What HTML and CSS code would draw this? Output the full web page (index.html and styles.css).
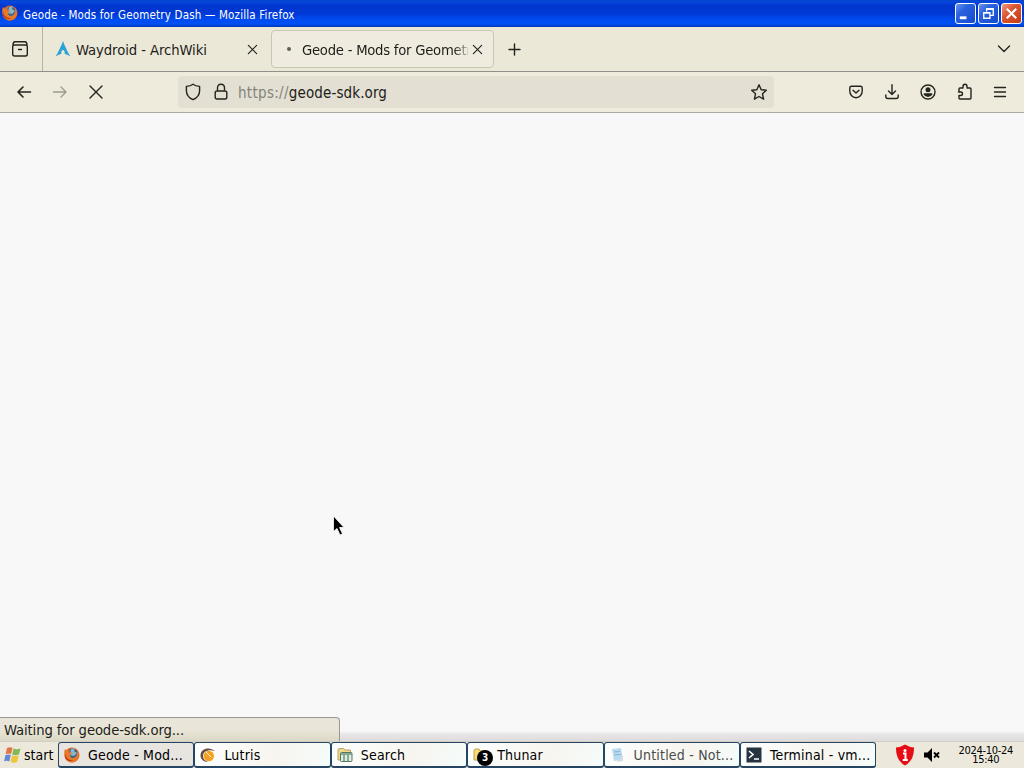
FILE: index.html
```html
<!DOCTYPE html>
<html lang="en">
<head>
    <meta charset="UTF-8">
    <title>Geode - Mods for Geometry Dash — Mozilla Firefox</title>
    <link rel="stylesheet" href="styles.css">
</head>
<body>
    <!-- Shared icons -->
    <svg class="defs" width="0" height="0">
        <symbol id="firefox" viewBox="0 0 16 16">
            <circle cx="8" cy="8" r="7.5" fill="#e8641b"/>
            <circle cx="8.7" cy="6.6" r="5" fill="#35688f"/>
            <path d="M7 2l4-1-1 3 3 2-3 3-4-1z" fill="#8fb3c9"/>
            <path d="M1 2l2 2 3-1-1 2 3 1-2 2c0 4 6 4 7-1 1-2 0-4-1-5 4 3 3 8 1 11-3 4-10 3-12-2C0 7 0 4 1 2z" fill="#e9792a"/>
            <path d="M1 5c0 6 4 9 9 8-3 2-8 1-9-3z" fill="#b93516"/>
        </symbol>
        <symbol id="close" viewBox="0 0 16 16"><path d="M2 2l12 12M14 2L2 14"/></symbol>
    </svg>

    <div class="desktop">
        <!-- Window title bar -->
        <header class="titlebar">
            <svg class="title-icon"><use href="#firefox"/></svg>
            <span class="title-text">Geode - Mods for Geometry Dash — Mozilla Firefox</span>
            <div class="window-buttons">
                <span class="window-button"><svg viewBox="0 0 20 20"><path d="M4 14.5h7" stroke-width="3"/></svg></span>
                <span class="window-button"><svg viewBox="0 0 20 20"><path d="M8 8V5h7v7h-3M5 9h6.500v6H5zM8 5.500h7M5 9.500h6" stroke-width="1.400"/></svg></span>
                <span class="window-button window-close"><svg viewBox="0 0 20 20"><path d="M5 5l10 10M15 5L5 15" stroke-width="2.200"/></svg></span>
            </div>
        </header>

        <!-- Tabs -->
        <div class="tabbar">
            <div class="firefox-view">
                <svg class="icon" width="18" height="18" viewBox="0 0 18 18"><path d="M4 1.800h10M3.500 5h11q1.800 0 1.800 1.800v7.400q0 1.800-1.800 1.800h-11q-1.800 0-1.800-1.800V6.800Q1.700 5 3.500 5zM2 5.500Q2 1.800 4 1.800M16 5.500Q16 1.800 14 1.800M7.500 9.500h3"/></svg>
            </div>
            <div class="tab">
                <svg class="tab-icon" width="16" height="16" viewBox="0 0 16 16"><path d="M8 0C7 3 4 10 .5 15.500c2.500-1.500 4.200-2.200 5.800-2.500-.3-2 .4-4 1.700-4s2 2 1.700 4c1.600.3 3.300 1 5.800 2.500C12 10 9 3 8 0z" fill="#2aa3d4"/></svg>
                <span class="tab-title">Waydroid - ArchWiki</span>
                <svg class="icon tab-close" width="11" height="11"><use href="#close"/></svg>
            </div>
            <div class="tab tab-active">
                <span class="loading-dot"></span>
                <span class="tab-title tab-fade">Geode - Mods for Geometry Dash</span>
                <svg class="icon tab-close" width="11" height="11"><use href="#close"/></svg>
            </div>
            <svg class="icon new-tab" width="13" height="13" viewBox="0 0 13 13"><path d="M6.500 1v11M1 6.500h11"/></svg>
            <svg class="icon all-tabs" width="14" height="10" viewBox="0 0 14 10"><path d="M1.500 2L7 7.500 12.500 2"/></svg>
        </div>

        <!-- Navigation -->
        <div class="navbar">
            <div class="nav-buttons">
                <svg class="icon" width="16" height="16" viewBox="0 0 16 16"><path d="M14.500 8H2M7 3L2 8l5 5" stroke-width="1.600"/></svg>
                <svg class="icon disabled" width="16" height="16" viewBox="0 0 16 16"><path d="M1.500 8H14M9 3l5 5-5 5"/></svg>
                <svg class="icon" width="16" height="16"><use href="#close"/></svg>
            </div>
            <div class="urlbar">
                <svg class="icon" width="16" height="18" viewBox="0 0 16 18"><path d="M8 1.200c2 1.500 4.200 2 6.600 2.200v4.300c0 4-2.200 7-6.600 9-4.400-2-6.600-5-6.600-9V3.400C3.800 3.200 6 2.700 8 1.200z"/></svg>
                <svg class="icon lock" width="14" height="18" viewBox="0 0 14 18"><path d="M3.500 8V5q0-3.800 3.500-3.800T10.500 5v3M3 8h8q1.800 0 1.800 1.800v4.400q0 1.800-1.800 1.800H3q-1.800 0-1.800-1.800V9.800Q1.200 8 3 8z"/></svg>
                <span class="url"><span class="url-scheme">https://</span>geode-sdk.org</span>
                <svg class="icon star" width="18" height="18" viewBox="0 0 18 18"><path d="M9 1.800l2.200 4.900 5.100.6-3.800 3.500 1.100 5.300L9 13.500l-4.600 2.600 1.100-5.300-3.800-3.500 5.100-.6z"/></svg>
            </div>
            <div class="nav-tools">
                <svg class="icon" width="16" height="16" viewBox="0 0 16 16"><path d="M3.500 2.200h9q1.700 0 1.700 1.700V7c0 4-2.700 6.700-6.200 6.700S1.800 11 1.800 7V3.900q0-1.700 1.700-1.700zM5 6.200l3 2.800 3-2.800"/></svg>
                <svg class="icon" width="16" height="16" viewBox="0 0 16 16"><path d="M8 .8v9.700M4.500 7L8 10.500 11.500 7M1.800 11v1.500q0 2 2 2h8.400q2 0 2-2V11"/></svg>
                <svg class="icon" width="16" height="16" viewBox="0 0 16 16"><circle cx="8" cy="8" r="7"/><circle cx="8" cy="5.800" r="2.500" class="solid"/><path d="M3.500 10.200q0-1 1-1h7q1 0 1 1Q11 13 8 13t-4.500-2.800z" class="solid"/></svg>
                <svg class="icon" width="16" height="18" viewBox="0 0 16 18"><path d="M2 9V6q0-1 1-1h3V3.500Q6 1.200 8 1.200t2 2.300V5h3q1 0 1 1v9q0 1-1 1H3q-1 0-1-1v-2.500h1.500q2 0 2-1.800T3.500 9H1.500"/></svg>
                <svg class="icon menu" width="14" height="14" viewBox="0 0 14 14"><path d="M1.500 2.500h11M1.500 7h11M1.500 11.500h11"/></svg>
            </div>
        </div>

        <!-- Page area -->
        <main class="page">
            <svg class="cursor" width="14" height="22" viewBox="0 0 14 22"><path d="M1.500 1v15.500l3.500-3 3 6.500 2.500-1.200L7.500 12.500H12z" fill="#000" stroke="#fff" stroke-width=".8"/></svg>
            <div class="status">Waiting for geode-sdk.org...</div>
        </main>

        <!-- Taskbar -->
        <footer class="taskbar">
            <div class="start">
                <svg width="18" height="18" viewBox="0 0 18 18">
                    <path d="M3 2q3-1.500 5.500 0L7 8Q4.500 7 1.700 8z" fill="#e27343"/>
                    <path d="M9.500 2.500q3 1.500 7 0L15 8.500q-4 1.300-6.800 0z" fill="#85b855"/>
                    <path d="M1.500 9Q4.500 7.800 6.800 9l-1.500 6.500q-3-1.500-5.300 0z" fill="#6488d8"/>
                    <path d="M8 9.500q3 1.200 6.800 0L13.200 16q-3.500 1.500-6.700-.3z" fill="#edc640"/>
                </svg>
                <span>start</span>
            </div>
            <div class="task task-active">
                <svg class="task-icon" viewBox="0 0 16 16"><use href="#firefox"/></svg>
                <span>Geode - Mod...</span>
            </div>
            <div class="task">
                <svg class="task-icon" viewBox="0 0 16 16"><circle cx="8.800" cy="9" r="5.200" fill="#f5a021"/><path d="M15 4C10-.5 .5 1 .5 8.500c0 4 3.500 6.500 7.500 6.500-3-1-5-3-5-6 0-5 6-7 12-5z" fill="#684c42"/><path d="M6 5l5 5" stroke="#fff2d9"/></svg>
                <span>Lutris</span>
            </div>
            <div class="task">
                <svg class="task-icon" viewBox="0 0 16 16"><path d="M1 13V3q0-1.500 1.500-1.500h4L8 3h5.500v10z" fill="#f1d887" stroke="#b6a168"/><rect x="3.500" y="5.500" width="11.500" height="9" rx="1" fill="#e0ece4" stroke="#59745f"/><path d="M4 7h11M7 7v7M11 7v7" stroke="#6b987c" stroke-width="1.500"/></svg>
                <span>Search</span>
            </div>
            <div class="task">
                <svg class="task-icon" viewBox="0 0 16 16"><path d="M1 13V4q0-2 2-2h3l1 2h6v9z" fill="#f7d97b" stroke="#c49f41"/></svg>
                <span class="badge">3</span>
                <span>Thunar</span>
            </div>
            <div class="task task-minimized">
                <svg class="task-icon" viewBox="0 0 16 16"><path d="M2 2l9-1 2 12-9 1z" fill="#b9daef"/><path d="M4 5l6-.6M4.500 8l6-.6" stroke="#80b5d8"/><path d="M7 15l6-1V8z" fill="#d5dce0"/></svg>
                <span>Untitled - Not...</span>
            </div>
            <div class="task">
                <svg class="task-icon" viewBox="0 0 16 16"><rect x=".5" y=".5" width="15" height="15" fill="#263441"/><path d="M3 4l4 3.500L3 11M8 12h5" fill="none" stroke="#fff" stroke-width="1.600"/></svg>
                <span>Terminal - vm...</span>
            </div>
            <div class="tray">
                <svg width="20" height="22" viewBox="0 0 20 22"><path d="M10 .5Q14 3 19 3.500 19.500 16 10 21.500.5 16 1 3.500 6 3 10 .5z" fill="#e60d17"/><circle cx="10" cy="6.500" r="1.500" fill="#fff"/><path d="M8 9.500h2.500V16M7.800 16h5" fill="none" stroke="#fff" stroke-width="2"/></svg>
                <svg width="16" height="16" viewBox="0 0 16 16"><path d="M0 5.500h3.500L8 1v14l-4.500-4.500H0z"/><path d="M10 5.500l5 5M15 5.500l-5 5" stroke="#000" stroke-width="1.800"/></svg>
                <div class="clock"><span>2024-10-24</span><span>15:40</span></div>
            </div>
        </footer>
    </div>
</body>
</html>
```
FILE: styles.css
```css
* {
    box-sizing: border-box;
}

body {
    margin: 0;
    overflow: hidden;
    font-family: "DejaVu Sans Condensed", "DejaVu Sans", sans-serif;
    font-stretch: condensed;
    color: #1c1c18;
}

svg {
    flex-shrink: 0;
}

.defs {
    display: block;
}

.desktop {
    width: 1024px;
    height: 768px;
    display: flex;
    flex-direction: column;
}

/* Title bar */
.titlebar {
    height: 27px;
    padding: 0 2px 0 2px;
    display: flex;
    align-items: center;
    background: linear-gradient(#0745c8 0, #0546df 2px, #0036ce 6px, #0039d6 14px, #004df1 20px, #0050f5 24px, #0736b4 27px);
    color: #fff;
}

.title-icon {
    width: 16px;
    height: 16px;
    margin: 0 5px 2px 0;
}

.title-text {
    padding-top: 2px;
    font-size: 11.5px;
    letter-spacing: 0.18px;
    white-space: nowrap;
}

.window-buttons {
    display: flex;
    gap: 2px;
    margin-left: auto;
}

.window-button {
    width: 21px;
    height: 21px;
    border: 1px solid #fff;
    border-radius: 3px;
    background: linear-gradient(135deg, #6a93f1, #2962de 35%, #144bcf);
}

.window-button svg {
    display: block;
    width: 19px;
    height: 19px;
    fill: none;
    stroke: #fff;
}

.window-close {
    background: linear-gradient(135deg, #ef9a7e, #dc5530 40%, #c43b18);
}

/* Browser toolbars */
.icon {
    fill: none;
    stroke: #24241e;
    stroke-width: 1.4;
    stroke-linecap: round;
    stroke-linejoin: round;
}

.solid {
    fill: #24241e;
    stroke: none;
}

.tabbar {
    height: 45px;
    display: flex;
    align-items: center;
    background: #ebe8d8;
    border-bottom: 1px solid #929189;
}

.firefox-view {
    width: 43px;
    height: 44px;
    display: flex;
    align-items: center;
    padding-left: 11px;
    border-right: 1px solid #b5b4ab;
}

.tab {
    width: 228px;
    height: 38px;
    padding: 0 13px 0 12px;
    display: flex;
    align-items: center;
    font-size: 14.7px;
}

.tab-icon {
    margin-right: 5px;
}

.tab-title {
    padding-top: 1px;
    white-space: nowrap;
    letter-spacing: -0.08px;
}

.tab-close {
    margin-left: auto;
    stroke-width: 1.7;
}

.tab-active {
    width: 223px;
    padding: 0 10px 0 15px;
    border: 1px solid #cac6b7;
    border-radius: 4px;
    background: #efecdf;
}

.loading-dot {
    width: 4px;
    height: 4px;
    margin-right: 11px;
    border-radius: 50%;
    background: #61615a;
}

.tab-fade {
    width: 166px;
    overflow: hidden;
    letter-spacing: -0.25px;
    mask-image: linear-gradient(to right, #000 152px, transparent 170px);
}

.new-tab {
    margin-left: 14px;
}

.all-tabs {
    margin: 0 13px 0 auto;
}

.navbar {
    height: 41px;
    display: flex;
    align-items: center;
    background: #eeebdd;
    border-bottom: 1px solid #aaa9a2;
}

.nav-buttons {
    width: 178px;
    padding-left: 16px;
    display: flex;
    gap: 20px;
}

.disabled {
    opacity: 0.4;
}

.urlbar {
    width: 596px;
    height: 32px;
    padding: 0 6px 0 7px;
    display: flex;
    align-items: center;
    border-radius: 4px;
    background: #e3dfd3;
    font-size: 15px;
}

.lock {
    margin: 0 10px 0 13px;
}

.url {
    padding-top: 1px;
    letter-spacing: 0.12px;
}

.url-scheme {
    color: #85837a;
    letter-spacing: 0.3px;
}

.star {
    margin-left: auto;
}

.nav-tools {
    margin: 0 17px 0 auto;
    display: flex;
    align-items: center;
    gap: 20.3px;
}

/* Page */
.page {
    position: relative;
    flex: 1;
    display: flex;
    align-items: flex-end;
    background: linear-gradient(to top, #dddbdc 0, #e8e6e6 7px, #f8f8f8 10px);
}

.cursor {
    position: absolute;
    left: 332px;
    top: 402px;
}

.status {
    width: 340px;
    height: 24px;
    padding: 0 4px;
    border: 1px solid #999891;
    border-left: none;
    border-bottom: none;
    border-radius: 0 4px 0 0;
    background: linear-gradient(#e9e6d9 50%, #dcd8c5);
    font-size: 14.7px;
    line-height: 24px;
    letter-spacing: -0.12px;
}

/* Taskbar */
.taskbar {
    height: 27px;
    display: flex;
    background: #ece9dc;
    border-top: 1px solid #d1cec5;
    color: #000;
    font-size: 14px;
}

.start {
    width: 58px;
    display: flex;
    align-items: center;
    gap: 2px;
    padding-left: 4px;
}

.task {
    position: relative;
    width: 136.4px;
    display: flex;
    align-items: center;
    padding-left: 5px;
    border: 1px solid #254562;
    border-bottom-width: 2px;
    border-radius: 3px;
    background: linear-gradient(110deg, #fcfffe, #f8f5ef 60%, #f4fcfa);
    letter-spacing: 0.2px;
    white-space: nowrap;
}

.task-active {
    background: #e8e4e0;
}

.task-minimized {
    color: #4b4b49;
}

.task-icon {
    width: 16px;
    height: 16px;
    margin-right: 8px;
}

/* Window count over the icon */
.badge {
    position: absolute;
    left: 9px;
    top: 7px;
    width: 16px;
    height: 16px;
    border-radius: 50%;
    background: #000;
    color: #fff;
    font-size: 10px;
    font-weight: bold;
    line-height: 16px;
    text-align: center;
}

.tray {
    flex: 1;
    display: flex;
    align-items: center;
    gap: 9px;
    padding: 0 11px 0 19px;
}

.clock {
    margin-left: auto;
    display: flex;
    flex-direction: column;
    align-items: center;
    font-size: 11px;
    line-height: 9px;
    letter-spacing: -0.3px;
    white-space: nowrap;
}
```
